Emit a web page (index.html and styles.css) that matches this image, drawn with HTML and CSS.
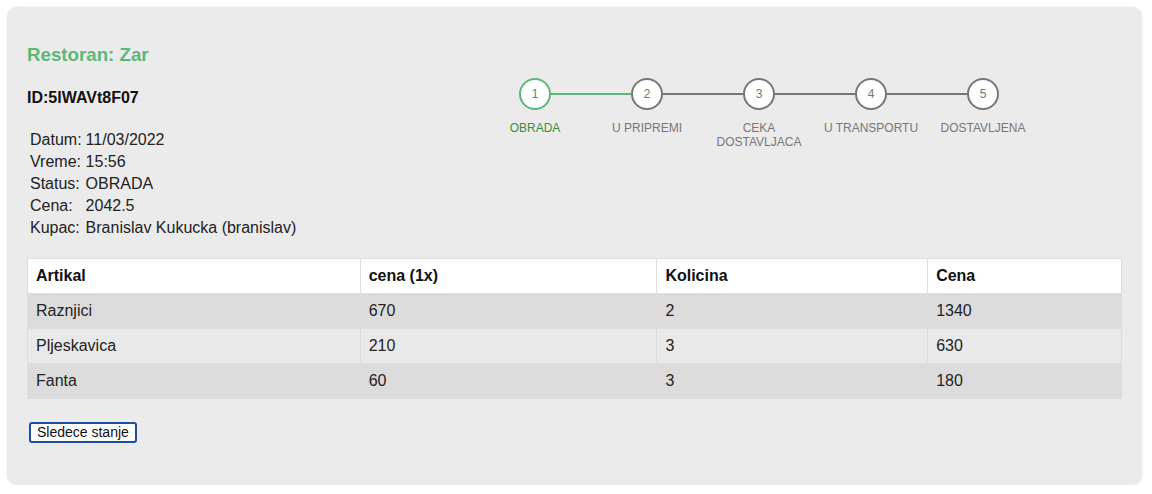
FILE: index.html
```html
<!DOCTYPE html>
<html>
<head>
<meta charset="utf-8">
<link rel="stylesheet" href="styles.css">
</head>
<body>
<div class="card">
  <div class="top">
    <div class="info">
      <h3 class="title">Restoran: Zar</h3>
      <div class="order-id">ID:5lWAVt8F07</div>
      <table class="details">
        <tr><td>Datum:</td><td>11/03/2022</td></tr>
        <tr><td>Vreme:</td><td>15:56</td></tr>
        <tr><td>Status:</td><td>OBRADA</td></tr>
        <tr><td>Cena:</td><td>2042.5</td></tr>
        <tr><td>Kupac:</td><td>Branislav Kukucka (branislav)</td></tr>
      </table>
    </div>
    <div class="stepper">
      <div class="step active done"><div class="circle">1</div><div class="label">OBRADA</div></div>
      <div class="step"><div class="circle">2</div><div class="label">U PRIPREMI</div></div>
      <div class="step"><div class="circle">3</div><div class="label">CEKA DOSTAVLJACA</div></div>
      <div class="step"><div class="circle">4</div><div class="label">U TRANSPORTU</div></div>
      <div class="step last"><div class="circle">5</div><div class="label">DOSTAVLJENA</div></div>
    </div>
  </div>
  <table class="items">
    <colgroup>
      <col class="c1"><col class="c2"><col class="c3"><col class="c4">
    </colgroup>
    <thead>
      <tr><th>Artikal</th><th>cena (1x)</th><th>Kolicina</th><th>Cena</th></tr>
    </thead>
    <tbody>
      <tr class="dark"><td>Raznjici</td><td>670</td><td>2</td><td>1340</td></tr>
      <tr class="light"><td>Pljeskavica</td><td>210</td><td>3</td><td>630</td></tr>
      <tr class="dark"><td>Fanta</td><td>60</td><td>3</td><td>180</td></tr>
    </tbody>
  </table>
  <button class="next-btn">Sledece stanje</button>
</div>
</body>
</html>
```
FILE: styles.css
```css
html, body {
  margin: 0;
  padding: 0;
  background: #ffffff;
}
body {
  font-family: "Liberation Sans", Arial, sans-serif;
  color: #222222;
  font-size: 16px;
}
.card {
  margin: 7px 0 0 7px;
  width: 1135px;
  height: 478px;
  box-sizing: border-box;
  background: #ebebeb;
  border-radius: 10px;
  box-shadow: 0 0 2px rgba(0, 0, 0, 0.12);
  padding: 37px 20px 0 20px;
}
.top {
  display: flex;
}
.info {
  width: 452px;
  flex: none;
}
.title {
  margin: 0;
  font-size: 18.72px;
  line-height: 22px;
  font-weight: bold;
  color: #5cb878;
}
.order-id {
  margin-top: 23px;
  font-weight: bold;
  font-size: 16px;
  line-height: 18px;
  color: #111;
}
.details {
  margin-top: 21px;
  border-spacing: 2px;
  font-size: 16px;
  line-height: 18px;
}
.details td {
  padding: 1px;
}
.stepper {
  display: flex;
  margin-top: 34px;
  align-items: flex-start;
}
.step {
  position: relative;
  width: 112px;
  display: flex;
  flex-direction: column;
  align-items: center;
}
.step::after {
  content: "";
  position: absolute;
  top: 15px;
  left: 72px;
  width: 80px;
  height: 2px;
  background: #777777;
}
.step.last::after {
  display: none;
}
.step.done::after {
  background: #5cb87a;
}
.circle {
  width: 32px;
  height: 32px;
  box-sizing: border-box;
  border: 2px solid #777777;
  border-radius: 50%;
  background: #ffffff;
  display: flex;
  align-items: center;
  justify-content: center;
  font-size: 12px;
  color: #777777;
}
.step.active .circle {
  border-color: #5cb87a;
}
.label {
  margin-top: 11px;
  font-size: 12px;
  line-height: 14px;
  color: #777777;
  text-align: center;
  padding: 0 4px;
}
.step.active .label {
  color: #3a8f3a;
}
.items {
  margin-top: 18px;
  width: 1095px;
  border-collapse: collapse;
  font-size: 16px;
  line-height: 18px;
}
.items .c1 { width: 333px; }
.items .c2 { width: 297px; }
.items .c3 { width: 271px; }
.items .c4 { width: 194px; }
.items th, .items td {
  border: 1px solid #dddddd;
  padding: 8px;
  text-align: left;
}
.items th {
  background: #ffffff;
  font-weight: bold;
  color: #111;
}
.items tr.dark td {
  background: #dcdcdc;
}
.items tr.light td {
  background: #e9e9e9;
}
.next-btn {
  display: block;
  margin: 23px 0 0 2px;
  font-family: "Liberation Sans", Arial, sans-serif;
  font-size: 14px;
  line-height: 15px;
  padding: 1px 6px;
  background: #ffffff;
  color: #111;
  border: 2px solid #1c4f9c;
  border-radius: 3px;
}
```
